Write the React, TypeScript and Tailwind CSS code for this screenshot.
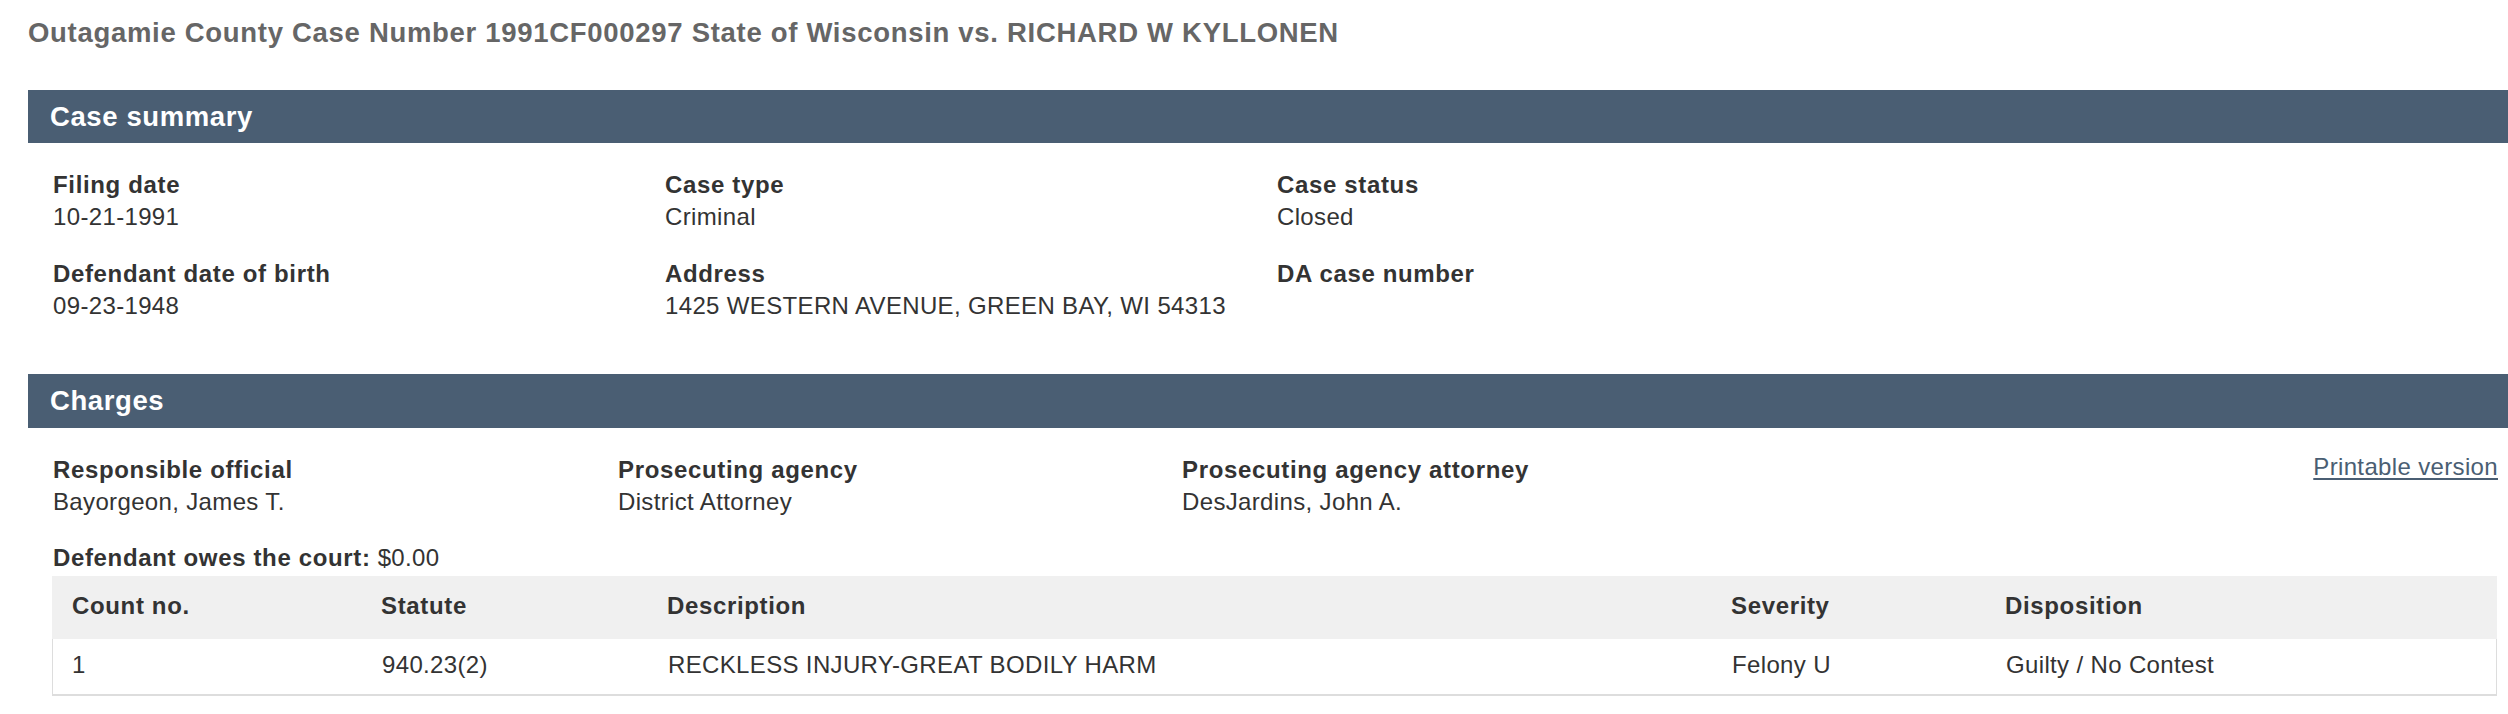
import React from "react";

function Field({ label, value, className = "" }: { label: string; value?: string; className?: string }) {
  return (
    <div className={className}>
      <div className="font-bold tracking-[0.65px]">{label}</div>
      {value !== undefined && <div>{value}</div>}
    </div>
  );
}

export default function App() {
  return (
    <div className="min-h-[714px] bg-white pl-[28px] font-['Liberation_Sans',Arial,sans-serif] text-[#333]">
      <h1 className="pt-[17px] text-[27.5px] leading-[32px] font-bold tracking-[0.7px] text-[#666]">
        Outagamie County Case Number 1991CF000297 State of Wisconsin vs. RICHARD W KYLLONEN
      </h1>

      <section className="mt-[41px]">
        <div className="flex h-[53px] items-center bg-[#4a5e73] pl-[22px] text-[27.5px] leading-none font-bold tracking-[0.6px] text-white">
          Case summary
        </div>
        <div className="grid grid-cols-[612px_612px_612px] gap-y-[25px] pt-[26px] pl-[25px] text-[24px] leading-[32px] tracking-[0.35px]">
          <Field label="Filing date" value="10-21-1991" />
          <Field label="Case type" value="Criminal" />
          <Field label="Case status" value="Closed" />
          <Field label="Defendant date of birth" value="09-23-1948" />
          <Field label="Address" value="1425 WESTERN AVENUE, GREEN BAY, WI 54313" />
          <Field label="DA case number" />
        </div>
      </section>

      <section className="mt-[52px]">
        <div className="flex h-[54px] items-center bg-[#4a5e73] pl-[22px] text-[27.5px] leading-none font-bold tracking-[0.6px] text-white">
          Charges
        </div>
        <div className="pt-[26px] pr-[10px] pl-[24px] text-[24px] leading-[32px] tracking-[0.35px]">
          <div className="flex items-start pl-[1px]">
            <div className="grid grid-cols-[565px_564px_564px]">
              <Field label="Responsible official" value="Bayorgeon, James T." />
              <Field label="Prosecuting agency" value="District Attorney" />
              <Field label="Prosecuting agency attorney" value="DesJardins, John A." />
            </div>
            <a href="#" className="-mt-[3px] ml-auto text-[#4a5e73] underline decoration-[2px] underline-offset-[3px]">
              Printable version
            </a>
          </div>
          <div className="mt-[24px] pl-[1px]">
            <span className="font-bold tracking-[0.65px]">Defendant owes the court:</span> $0.00
          </div>
          <div className="mt-[2px] mr-[1px]">
            <div className="grid h-[63px] grid-cols-[309px_286px_1064px_274px_1fr] items-center bg-[#f0f0f0] pb-[4px] font-bold tracking-[0.65px]">
              <div className="pl-[20px]">Count no.</div>
              <div className="pl-[20px]">Statute</div>
              <div className="pl-[20px]">Description</div>
              <div className="pl-[20px]">Severity</div>
              <div className="pl-[20px]">Disposition</div>
            </div>
            <div className="grid h-[57px] grid-cols-[309px_286px_1064px_274px_1fr] items-center border-x border-b-2 border-[#ddd] pb-[3px]">
              <div className="pl-[19px]">1</div>
              <div className="pl-[20px]">940.23(2)</div>
              <div className="pl-[20px]">RECKLESS INJURY-GREAT BODILY HARM</div>
              <div className="pl-[20px]">Felony U</div>
              <div className="pl-[20px]">Guilty / No Contest</div>
            </div>
          </div>
        </div>
      </section>
    </div>
  );
}
